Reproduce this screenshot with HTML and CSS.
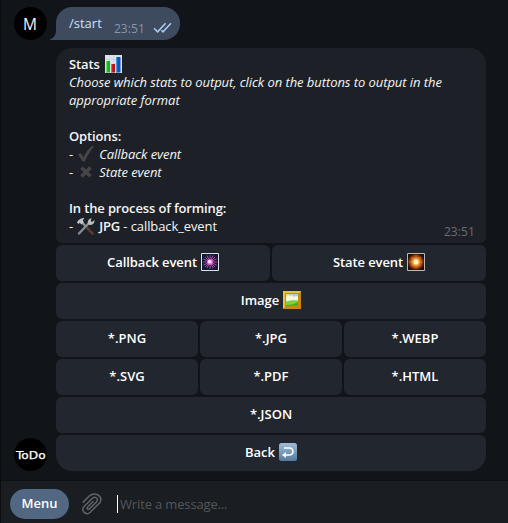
FILE: index.html
```html
<!DOCTYPE html>
<html lang="en">
<head>
<meta charset="utf-8">
<title>Chat</title>
<link rel="stylesheet" href="styles.css">
</head>
<body>
<main class="chat">
  <section class="row outgoing">
    <div class="avatar avatar-user">M</div>
    <div class="bubble">
      <svg class="tail" width="14" height="17" viewBox="0 0 14 17"><path d="M6 0V7C6 12 4 15 0 16.2V17H14V0Z" fill="#3e4a5e"/></svg>
      <span class="command">/start</span>
      <span class="time sent">23:51</span>
      <svg class="checks" width="19" height="12" viewBox="0 0 19 12" fill="none" stroke="#a9cdf5" stroke-width="1.5"><path d="M1 6.2 4.6 9.8 12.6 1.2M8.4 8.2 10 9.8 18 1.2"/></svg>
    </div>
  </section>

  <section class="row incoming">
    <div class="avatar avatar-bot"><span class="logo">ToDo</span></div>
    <div class="message">
      <article class="card">
        <p><b>Stats</b><svg class="emoji stats" width="17" height="18" viewBox="0 0 17 18"><path fill="#dce4ed" d="M0 0h17v18H0z"/><path d="M0 4.5h17M0 9h17M0 13.500h17M4.500 0v18M9 0v18M13 0v18" stroke="#c2cedb" stroke-width=".6"/><path fill="#14b51d" d="M1 6h4v11.500H1z"/><path fill="#62df58" d="M1 6h1.200v11H1z"/><path fill="#bd1016" d="M6 9h4v8.500H6z"/><path fill="#e95a50" d="M6 9h1.200v8H6z"/><path fill="#0c55bd" d="M11 2h4.500v15.500H11z"/><path fill="#4894e4" d="M11 2h1.200v15H11z"/></svg></p>
        <p><i>Choose which stats to output, click on the buttons to output in the</i></p>
        <p><i>appropriate format</i></p>
        <p class="gap"></p>
        <p><b>Options:</b></p>
        <p>-<svg class="emoji item" width="18" height="18" viewBox="0 0 18 18"><path d="M1 9.500 3.500 8 6.500 12.300Q10 4.500 15.500.8L17 1.600Q12 7 8 16.500H5.500Z" fill="#454545"/></svg><i>Callback event</i></p>
        <p>-<svg class="emoji item" width="18" height="18" viewBox="0 0 18 18"><path d="M4.500 4.800 13.500 13.200M13.500 4.500 4.500 13.500" stroke="#454545" stroke-width="3.600"/></svg><i>State event</i></p>
        <p class="gap"></p>
        <p><b>In the process of forming:</b></p>
        <p>-<svg class="emoji item" width="18" height="18" viewBox="0 0 18 18"><path d="M5.500 6 15.500 16.500" stroke="#5b3c2c" stroke-width="2.600" stroke-linecap="round"/><path d="M4.500 5 8.500 9" stroke="#8a949c" stroke-width="2"/><path d="M0 5.500Q2 1 7.500 1L5.700 3.500 7 5.200 4.300 7.500 2.800 5.800 1.500 7Z" fill="#bdc4c8"/><path d="M12 6 2 16.500" stroke="#858e93" stroke-width="2.400" stroke-linecap="round"/><path d="M11 7Q9.800 2.500 14.500 1L13.800 4 15 4.900 17.500 3Q17.800 8 12.500 8Z" fill="#b6bfc4"/></svg><b>JPG</b><span>&nbsp;- callback_event</span></p>
        <span class="time received">23:51</span>
      </article>
      <div class="keyboard">
        <button class="half">Callback event <svg width="18" height="18" viewBox="0 0 18 18"><path fill="#111b38" stroke="#dce1e5" d="M.5.5h17v17H.5z"/><path d="M9 2v14M2 9h14M4 4l10 10M14 4 4 14M6 2.500 12 15M12 2.500 6 15M2.500 6l13 6M2.500 12l13-6" stroke="#b545a5" stroke-width="1"/><circle cx="9" cy="9" r="2.800" fill="#e87acb"/><circle cx="8.600" cy="8.600" r="1.700" fill="#ffe2fb"/></svg></button>
        <button class="half">State event <svg width="18" height="18" viewBox="0 0 18 18"><defs><radialGradient id="fire"><stop offset="0" stop-color="#fffde0"/><stop offset=".25" stop-color="#ffd783"/><stop offset=".5" stop-color="#df761e"/><stop offset=".8" stop-color="#7c300d"/><stop offset="1" stop-color="#241008"/></radialGradient></defs><path fill="url(#fire)" stroke="#b9b9b8" d="M.5.5h17v17H.5z"/><path d="M9 2v14M2 9h14M4 4l10 10M14 4 4 14" stroke="#ffad43" stroke-width=".6" stroke-dasharray="1 1"/><circle cx="9" cy="9" r="2.200" fill="#fff4c2"/></svg></button>
        <button class="full">Image <svg width="18" height="18" viewBox="0 0 18 18"><path fill="#c58b16" d="M0 0h18v18H0z"/><path fill="#efc13b" d="M0 0h18l-2 2H2v14l-2 2z"/><path fill="#99d6f3" d="M3 3h12v12H3z"/><path fill="#f8f8df" d="M3 5q2-2 4 .2Q9 3 11 6q2-2 4 0v3L3 10z"/><path fill="#ffdc45" d="M3 3h3L3 6z"/><path fill="#84cf39" d="M3 11q6-3 12-1v5H3z"/><path fill="#4daa2b" d="M3 14q7 0 12-3v4H3z"/></svg></button>
        <button class="third">*.PNG</button>
        <button class="third">*.JPG</button>
        <button class="third">*.WEBP</button>
        <button class="third">*.SVG</button>
        <button class="third">*.PDF</button>
        <button class="third">*.HTML</button>
        <button class="full">*.JSON</button>
        <button class="full last">Back <svg width="18" height="18" viewBox="0 0 18 18"><defs><linearGradient id="blue" x2="0" y2="1"><stop stop-color="#9fbdd7"/><stop offset="1" stop-color="#547b9e"/></linearGradient></defs><rect width="18" height="18" rx="2.500" fill="url(#blue)"/><path d="M5 5h5.500a3.500 3.500 0 0 1 0 7H6" fill="none" stroke="#fff" stroke-width="1.600"/><path d="M7 9v6l-4-3z" fill="#fff"/></svg></button>
      </div>
    </div>
  </section>
</main>
<footer class="composer">
  <button class="menu">Menu</button>
  <svg class="clip" width="20" height="22" viewBox="0 0 20 22" fill="none" stroke="#606468" stroke-width="1.500" stroke-linecap="round"><path d="M1.200 9.100 7.500 2.800C12-.8 21 1.500 18.200 9.400L8.200 19.300C4 23.200-1.600 17.600 2.300 13.300L10.400 5.300C13.400 2.700 17 6 14.400 9L7.700 15.600C5.800 17.200 4.200 15.500 5.900 13.700L11.200 8.500"/></svg>
  <div class="input">Write a message...</div>
</footer>
</body>
</html>
```

FILE: styles.css
```css
* { box-sizing: border-box; }

body {
  margin: 0;
  width: 508px;
  height: 523px;
  display: flex;
  flex-direction: column;
  overflow: hidden;
  background: #111418;
  border-left: 1px solid #0b0e11;
  color: #f5f5f5;
  font: 13px/18px "Open Sans", "Noto Sans", sans-serif;
}

svg { display: block; flex: none; }

.chat {
  flex: 1;
  display: flex;
  flex-direction: column;
  gap: 8px;
  padding: 7px 21px 9px 13px;
}

.row { display: flex; align-items: flex-end; gap: 9px; }

.avatar {
  width: 33px;
  height: 33px;
  flex: none;
  display: flex;
  align-items: center;
  justify-content: center;
  overflow: hidden;
  border-radius: 50%;
  background: #000;
}

.avatar-user { padding-right: 1px; font-size: 15.5px; }

.logo {
  color: #fff;
  font: 10.5px/18px "DejaVu Sans", sans-serif;
  -webkit-text-stroke: .25px #fff;
  transform: scaleX(1.16);
}

.bubble {
  position: relative;
  width: 124px;
  height: 33px;
  display: flex;
  align-items: flex-start;
  padding: 7px 8px 0 13px;
  border-radius: 16px 16px 16px 0;
  background: #3e4a5e;
}

.tail { position: absolute; left: -6px; bottom: 0; }
.command { width: 45px; color: #cce3ff; }
.time { font-size: 12px; letter-spacing: .1px; }
.sent { margin-top: 6px; color: #8796ab; }
.checks { margin: 8px 0 0 8px; }
.incoming { align-items: flex-end; }
.message { width: 430px; display: flex; flex-direction: column; gap: 2px; }

.card {
  position: relative;
  height: 195px;
  padding: 7px 13px;
  border-radius: 16px 16px 6px 6px;
  background: #1d2127;
}

p {
  display: flex;
  align-items: center;
  height: 18px;
  margin: 0;
  white-space: nowrap;
}

b { font-weight: 600; letter-spacing: -.14px; }
i { letter-spacing: -.06px; }
p span { letter-spacing: -.1px; }
.stats { margin-left: 5px; }
.item { margin: 0 4px; }
.received { position: absolute; right: 11px; bottom: 2px; color: #696d73; }

.keyboard {
  display: grid;
  grid-template-columns: repeat(6, 1fr);
  grid-auto-rows: 36px;
  gap: 2px;
}

button {
  display: flex;
  align-items: center;
  justify-content: center;
  gap: 4px;
  padding: 0 0 2px;
  border: 0;
  color: #fff;
  font: 600 13px/18px "Open Sans", "Noto Sans", sans-serif;
}

.keyboard button { border-radius: 6px; background: #22262e; }
.half { grid-column: span 3; letter-spacing: -.1px; }
.third { grid-column: span 2; }
.full { grid-column: span 6; }
.keyboard .last { border-radius: 6px 6px 16px 16px; }

.composer {
  height: 43px;
  flex: none;
  display: flex;
  align-items: center;
  padding: 3px 9px 0;
  border-top: 1px solid #0d1013;
  background: #1a1d21;
}

.menu {
  width: 59px;
  height: 30px;
  border-radius: 15px;
  background: #526782;
}

.clip { margin: 1px 0 0 13px; }

.input {
  height: 18px;
  margin-left: 15px;
  padding-left: 2px;
  border-left: 1px solid #fff;
  color: #53575c;
  line-height: 18px;
  letter-spacing: -.15px;
}
```
